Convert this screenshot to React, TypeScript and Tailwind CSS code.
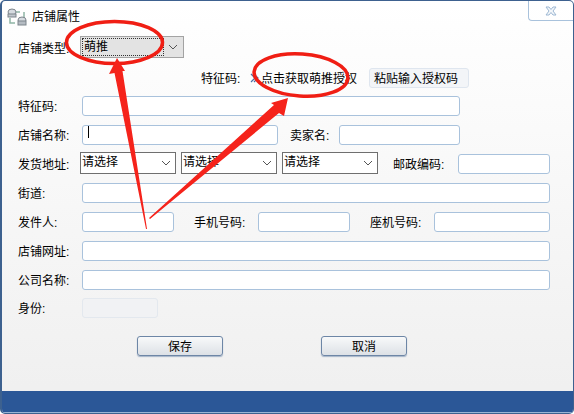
const font = "font-['Liberation_Sans','Noto_Sans_CJK_SC',sans-serif]";

const inputClass = "h-5 rounded-[3px] border border-[#a9c2dc] bg-white";

function Label({ text, className = "w-16" }: { text: string; className?: string }) {
  return <span className={`h-5 shrink-0 text-xs leading-[22px] text-black ${className}`}>{text}</span>;
}

function Chevron() {
  return (
    <svg width="10" height="6" viewBox="0 0 10 6" className="shrink-0">
      <path d="M1 1l4 4 4-4" fill="none" stroke="#555" strokeWidth="1" />
    </svg>
  );
}

function Select({ width }: { width: string }) {
  return (
    <div className={`flex h-[22px] items-center justify-between border border-[#6f6f6f] bg-white pl-[1px] pr-[4px] ${width}`}>
      <span className="-mt-[3px] text-xs leading-5 text-black">请选择</span>
      <Chevron />
    </div>
  );
}

function Button({ text }: { text: string }) {
  return (
    <button className="h-5 w-[86px] rounded-[3px] border border-[#6d86a6] bg-gradient-to-b from-[#f8f9fa] to-[#dde1e6] pt-px text-xs leading-none text-black shadow-[0_1px_1px_rgba(90,120,160,0.5)]">
      {text}
    </button>
  );
}

function Annotations() {
  return (
    <svg width="574" height="414" viewBox="0 0 574 414" className="pointer-events-none absolute -left-[2px] -top-px">
      <ellipse cx="114.5" cy="42.5" rx="48" ry="21" fill="none" stroke="#f01e14" strokeWidth="3.5" />
      <ellipse cx="301" cy="75" rx="47" ry="21" fill="none" stroke="#f01e14" strokeWidth="3.5" transform="rotate(4 301 75)" />
      <polygon points="117,58 125,71 122.5,71 147,229 146,229 114.5,73 109,74" fill="#f5231b" />
      <polygon points="288,98 284,116 279,113 150,219 149,218 274,105 271,103" fill="#f5231b" />
    </svg>
  );
}

export default function App() {
  return (
    <div className={`relative flex h-[414px] w-[574px] flex-col overflow-hidden rounded-[5px] border border-[#3d618f] border-l-2 bg-gradient-to-b from-white to-[#efefef] ${font}`}>
      <div className="flex h-[35px] shrink-0 items-start justify-between">
        <div className="flex items-center gap-[5px] pl-[5px] pt-[6px]">
          <svg width="20" height="18" viewBox="0 0 20 18">
            <path d="M8 4h5M3 10v5h5M17 4v6" fill="none" stroke="#8fb5a5" strokeWidth="1.5" />
            <ellipse cx="5" cy="4" rx="4" ry="3" fill="#d6dbe0" stroke="#7d858c" />
            <rect x="1" y="6" width="8" height="3" fill="#c0c6cc" stroke="#7d858c" />
            <ellipse cx="15" cy="12" rx="4" ry="3" fill="#d6dbe0" stroke="#7d858c" />
            <rect x="11" y="13" width="8" height="4" fill="#b4bbc2" stroke="#7d858c" />
          </svg>
          <span className="text-xs leading-5 text-black">店铺属性</span>
        </div>
        <div className="flex h-[20px] w-[45px] items-center justify-center rounded-bl-[4px] border-b border-l border-[#a9c2dc]">
          <svg width="12" height="10" viewBox="0 0 12 10">
            <path d="M1 1h3l2 2.5L8 1h3L8 5l3 4H8L6 6.5 4 9H1l3-4z" fill="#f4f7fa" stroke="#9db7d3" />
          </svg>
        </div>
      </div>

      <div className="flex flex-col pl-[16px]">
        <div className="flex h-[22px] items-start">
          <span className="h-[22px] w-[62px] shrink-0 text-xs leading-[26px] text-black">店铺类型:</span>
          <div className="flex h-[22px] w-[104px] items-center border border-[#a3a3a3] bg-[#e3e3e3] p-[1px]">
            <div className="flex h-full w-[82px] items-center border border-dotted border-[#333] pl-[1px] text-xs text-black">萌推</div>
            <div className="flex flex-1 items-center justify-center"><Chevron /></div>
          </div>
        </div>

        <div className="mt-[10px] flex h-5 items-center pl-[183px]">
          <Label text="特征码:" className="w-[49px]" />
          <span className="flex w-[11px] items-center">
            <svg width="9" height="10" viewBox="0 0 9 10">
              <path d="M1 1l4 4-4 4M4 1l4 4-4 4" fill="none" stroke="#4a6fa5" strokeWidth="1.2" />
            </svg>
          </span>
          <Label text="点击获取萌推授权" className="w-[108px]" />
          <div className="flex h-5 w-[100px] items-center rounded-[3px] border border-[#dfe6ef] bg-[#f3f5f8] pl-[4px] pt-px text-xs text-black">粘贴输入授权码</div>
        </div>

        <div className="mt-[8px] flex flex-col gap-[9px]">
          <div className="flex items-center">
            <Label text="特征码:" />
            <div className={`${inputClass} w-[378px]`} />
          </div>
          <div className="flex items-center">
            <Label text="店铺名称:" />
            <div className={`${inputClass} flex w-[196px] items-start pl-[5px]`}>
              <span className="h-3 w-px bg-black" />
            </div>
            <Label text="卖家名:" className="ml-[12px] w-[49px]" />
            <div className={`${inputClass} w-[121px]`} />
          </div>
          <div className="-mt-[2px] flex items-start">
            <Label text="发货地址:" className="mt-[2px] w-[62px]" />
            <div className="flex gap-[5px]">
              <Select width="w-[96px]" />
              <Select width="w-[96px]" />
              <Select width="w-[96px]" />
            </div>
            <Label text="邮政编码:" className="ml-[15px] mt-[2px] w-[65px]" />
            <div className={`${inputClass} mt-[2px] w-[92px]`} />
          </div>
          <div className="flex items-center">
            <Label text="街道:" />
            <div className={`${inputClass} w-[468px]`} />
          </div>
          <div className="flex items-center">
            <Label text="发件人:" />
            <div className={`${inputClass} w-[92px]`} />
            <Label text="手机号码:" className="ml-[20px] w-[64px]" />
            <div className={`${inputClass} w-[92px]`} />
            <Label text="座机号码:" className="ml-[20px] w-[64px]" />
            <div className={`${inputClass} w-[116px]`} />
          </div>
          <div className="flex items-center">
            <Label text="店铺网址:" />
            <div className={`${inputClass} w-[468px]`} />
          </div>
          <div className="flex items-center">
            <Label text="公司名称:" />
            <div className={`${inputClass} w-[468px]`} />
          </div>
          <div className="-mt-px flex items-center">
            <Label text="身份:" />
            <div className="h-5 w-[76px] rounded-[3px] border border-[#e3e8ee] bg-[#f1f2f4]" />
          </div>
        </div>

        <div className="mt-[18px] flex gap-[98px] pl-[119px]">
          <Button text="保存" />
          <Button text="取消" />
        </div>
      </div>

      <div className="mt-auto h-[22px] shrink-0 border-b border-[#9ab4d4] bg-[#2b5797]" />
      <Annotations />
    </div>
  );
}
